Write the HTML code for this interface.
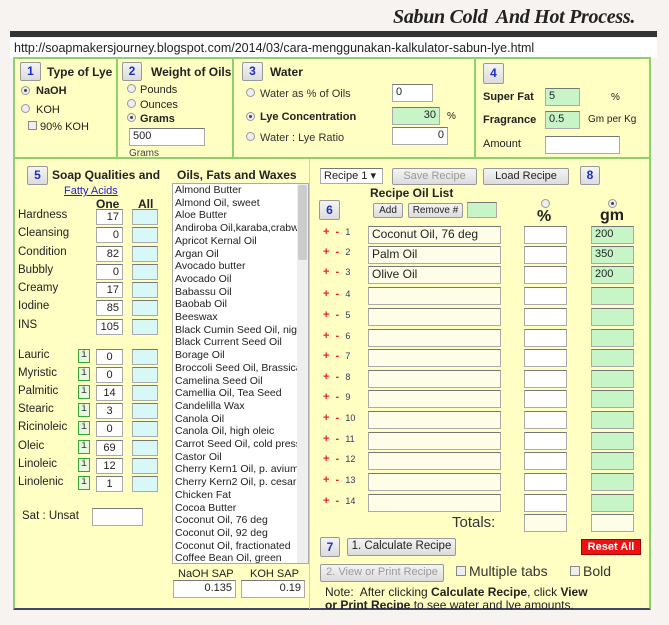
<!DOCTYPE html>
<html><head><meta charset="utf-8"><style>
*{box-sizing:border-box;margin:0;padding:0}
body{width:669px;height:625px;background:#f7f3f1;position:relative;overflow:hidden;font-family:"Liberation Sans","DejaVu Sans",sans-serif;font-size:11px;color:#222}
.a{position:absolute;white-space:nowrap}
.in{position:absolute;background:#fff;border:1px solid #aaa;border-top-color:#777;font-size:11px;text-align:right;padding:1px 3px;line-height:13px}
.g{background:#c8f5c8}
.c{background:#d8f8f8}
.y{background:#fdfde8}
.btn{position:absolute;background:linear-gradient(#f4f4f4,#dcdcdc);border:1px solid #999;border-radius:2px;text-align:center;font-size:11px;line-height:15px}
.num{color:#1a2fc8;font-weight:bold;font-size:12px}
.b{font-weight:bold}
.r{position:absolute;width:9px;height:9px;border-radius:50%;border:1px solid #999;background:#eee}
.r.on::after{content:"";position:absolute;left:2px;top:2px;width:3px;height:3px;border-radius:50%;background:#444}
.i{position:absolute;width:12px;height:14px;border:1px solid #3a3;background:#e8f8e0;font-size:10px;text-align:center;line-height:12px;font-family:"Liberation Mono",monospace;color:#333}
.lbl{position:absolute;font-size:11.5px;color:#222}
</style></head><body>
<div class="a" style="left:393px;top:6px;font-family:'Liberation Serif',serif;font-style:italic;font-weight:bold;font-size:20px;letter-spacing:-0.3px;color:#222">Sabun Cold&nbsp; And Hot Process.</div>
<div class="a" style="left:10px;top:31px;width:647px;height:6px;background:#333"></div>
<div class="a" style="left:10px;top:38px;width:647px;height:20px;background:#fff"></div>
<div class="a" style="left:14px;top:41px;font-size:12.5px;color:#222">http://soapmakersjourney.blogspot.com/2014/03/cara-menggunakan-kalkulator-sabun-lye.html</div>
<!-- main panel -->
<div class="a" style="left:13px;top:57px;width:638px;height:553px;background:#ffffc4;border:2px solid #8fcf6f;border-bottom-color:#446"></div>
<div class="a" style="left:13px;top:157px;width:638px;height:2px;background:#8fcf6f"></div>
<div class="a" style="left:116px;top:57px;width:2px;height:101px;background:#8fcf6f"></div>
<div class="a" style="left:232px;top:57px;width:2px;height:101px;background:#8fcf6f"></div>
<div class="a" style="left:474px;top:57px;width:2px;height:101px;background:#8fcf6f"></div>
<div class="a" style="left:309px;top:159px;width:1px;height:450px;background:#ccc"></div>

<!-- 1 -->
<div class="btn num" style="left:20px;top:62px;width:21px;height:19px;line-height:17px">1</div>
<div class="a b" style="left:47px;top:65px;font-size:12px">Type of Lye</div>
<div class="r on" style="left:21px;top:86px"></div><div class="a b" style="left:36px;top:85px">NaOH</div>
<div class="r" style="left:21px;top:104px"></div><div class="a" style="left:36px;top:104px">KOH</div>
<div class="a" style="left:28px;top:121px;width:9px;height:9px;border:1px solid #888;background:#eee"></div><div class="a" style="left:40px;top:121px">90% KOH</div>
<!-- 2 -->
<div class="btn num" style="left:122px;top:62px;width:20px;height:19px;line-height:17px">2</div>
<div class="a b" style="left:151px;top:65px;font-size:12px">Weight of Oils</div>
<div class="r" style="left:127px;top:84px"></div><div class="a" style="left:140px;top:84px">Pounds</div>
<div class="r" style="left:127px;top:99px"></div><div class="a" style="left:140px;top:99px">Ounces</div>
<div class="r on" style="left:127px;top:113px"></div><div class="a b" style="left:140px;top:113px">Grams</div>
<div class="in" style="left:129px;top:128px;width:76px;height:18px;text-align:left">500</div>
<div class="a" style="left:129px;top:148px;font-size:10px;color:#444">Grams</div>
<!-- 3 -->
<div class="btn num" style="left:242px;top:62px;width:21px;height:19px;line-height:17px">3</div>
<div class="a b" style="left:270px;top:65px;font-size:12px">Water</div>
<div class="r" style="left:246px;top:88px"></div><div class="a" style="left:260px;top:88px;color:#333">Water as % of Oils</div>
<div class="in" style="left:392px;top:84px;width:41px;height:18px;text-align:left">0</div>
<div class="r on" style="left:246px;top:112px"></div><div class="a b" style="left:260px;top:111px">Lye Concentration</div>
<div class="in g" style="left:392px;top:107px;width:48px;height:18px">30</div><div class="a" style="left:447px;top:111px;font-size:10px">%</div>
<div class="r" style="left:246px;top:132px"></div><div class="a" style="left:260px;top:132px;color:#333">Water : Lye Ratio</div>
<div class="in" style="left:392px;top:127px;width:56px;height:18px">0</div>
<!-- 4 -->
<div class="btn num" style="left:483px;top:63px;width:21px;height:21px;line-height:19px">4</div>
<div class="a b" style="left:483px;top:91px">Super Fat</div>
<div class="in g" style="left:545px;top:88px;width:35px;height:18px;text-align:left">5</div><div class="a" style="left:611px;top:92px;font-size:10px">%</div>
<div class="a b" style="left:483px;top:114px">Fragrance</div>
<div class="in g" style="left:545px;top:111px;width:35px;height:18px;text-align:left">0.5</div><div class="a" style="left:588px;top:114px;font-size:10px">Gm per Kg</div>
<div class="a" style="left:483px;top:138px">Amount</div>
<div class="in" style="left:545px;top:136px;width:75px;height:18px"></div>

<!-- 5 -->
<div class="btn num" style="left:27px;top:166px;width:21px;height:19px;line-height:17px">5</div>
<div class="a b" style="left:52px;top:168px;font-size:12px">Soap Qualities and</div>
<div class="a" style="left:64px;top:185px;color:#22c;text-decoration:underline">Fatty Acids</div>
<div class="a b" style="left:96px;top:197px;font-size:12px">One</div><div class="a b" style="left:138px;top:197px;font-size:12px">All</div>
<div class="lbl" style="left:18px;top:209px">Hardness</div><div class="in" style="left:96px;top:209px;width:27px;height:16px">17</div><div class="in c" style="left:132px;top:209px;width:26px;height:16px"></div>
<div class="lbl" style="left:18px;top:227px">Cleansing</div><div class="in" style="left:96px;top:227px;width:27px;height:16px">0</div><div class="in c" style="left:132px;top:227px;width:26px;height:16px"></div>
<div class="lbl" style="left:18px;top:246px">Condition</div><div class="in" style="left:96px;top:246px;width:27px;height:16px">82</div><div class="in c" style="left:132px;top:246px;width:26px;height:16px"></div>
<div class="lbl" style="left:18px;top:264px">Bubbly</div><div class="in" style="left:96px;top:264px;width:27px;height:16px">0</div><div class="in c" style="left:132px;top:264px;width:26px;height:16px"></div>
<div class="lbl" style="left:18px;top:282px">Creamy</div><div class="in" style="left:96px;top:282px;width:27px;height:16px">17</div><div class="in c" style="left:132px;top:282px;width:26px;height:16px"></div>
<div class="lbl" style="left:18px;top:300px">Iodine</div><div class="in" style="left:96px;top:300px;width:27px;height:16px">85</div><div class="in c" style="left:132px;top:300px;width:26px;height:16px"></div>
<div class="lbl" style="left:18px;top:319px">INS</div><div class="in" style="left:96px;top:319px;width:27px;height:16px">105</div><div class="in c" style="left:132px;top:319px;width:26px;height:16px"></div>

<div class="lbl" style="left:18px;top:349px">Lauric</div><div class="i" style="left:78px;top:349px">i</div><div class="in" style="left:96px;top:349px;width:27px;height:16px;text-align:center">0</div><div class="in c" style="left:132px;top:349px;width:26px;height:16px"></div>
<div class="lbl" style="left:18px;top:367px">Myristic</div><div class="i" style="left:78px;top:367px">i</div><div class="in" style="left:96px;top:367px;width:27px;height:16px;text-align:center">0</div><div class="in c" style="left:132px;top:367px;width:26px;height:16px"></div>
<div class="lbl" style="left:18px;top:385px">Palmitic</div><div class="i" style="left:78px;top:385px">i</div><div class="in" style="left:96px;top:385px;width:27px;height:16px;text-align:center">14</div><div class="in c" style="left:132px;top:385px;width:26px;height:16px"></div>
<div class="lbl" style="left:18px;top:403px">Stearic</div><div class="i" style="left:78px;top:403px">i</div><div class="in" style="left:96px;top:403px;width:27px;height:16px;text-align:center">3</div><div class="in c" style="left:132px;top:403px;width:26px;height:16px"></div>
<div class="lbl" style="left:18px;top:421px">Ricinoleic</div><div class="i" style="left:78px;top:421px">i</div><div class="in" style="left:96px;top:421px;width:27px;height:16px;text-align:center">0</div><div class="in c" style="left:132px;top:421px;width:26px;height:16px"></div>
<div class="lbl" style="left:18px;top:440px">Oleic</div><div class="i" style="left:78px;top:440px">i</div><div class="in" style="left:96px;top:440px;width:27px;height:16px;text-align:center">69</div><div class="in c" style="left:132px;top:440px;width:26px;height:16px"></div>
<div class="lbl" style="left:18px;top:458px">Linoleic</div><div class="i" style="left:78px;top:458px">i</div><div class="in" style="left:96px;top:458px;width:27px;height:16px;text-align:center">12</div><div class="in c" style="left:132px;top:458px;width:26px;height:16px"></div>
<div class="lbl" style="left:18px;top:476px">Linolenic</div><div class="i" style="left:78px;top:476px">i</div><div class="in" style="left:96px;top:476px;width:27px;height:16px;text-align:center">1</div><div class="in c" style="left:132px;top:476px;width:26px;height:16px"></div>
<div class="lbl" style="left:22px;top:510px">Sat : Unsat</div><div class="in" style="left:92px;top:508px;width:51px;height:18px"></div>

<!-- oils list -->
<div class="a b" style="left:177px;top:168px;font-size:12px">Oils, Fats and Waxes</div>
<div class="a" style="left:172px;top:183px;width:137px;height:381px;background:#fff;border:1px solid #aaa;overflow:hidden">
<div style="position:absolute;right:0;top:0;width:11px;height:100%;background:#eee"></div>
<div style="position:absolute;right:1px;top:1px;width:9px;height:75px;background:#ccc;border-radius:2px"></div>
<div style="position:absolute;left:2px;top:0;font-size:10.5px;line-height:12.7px;color:#222;width:122px;overflow:hidden">
Almond Butter<br>Almond Oil, sweet<br>Aloe Butter<br>Andiroba Oil,karaba,crabwood<br>Apricot Kernal Oil<br>Argan Oil<br>Avocado butter<br>Avocado Oil<br>Babassu Oil<br>Baobab Oil<br>Beeswax<br>Black Cumin Seed Oil, nigella<br>Black Current Seed Oil<br>Borage Oil<br>Broccoli Seed Oil, Brassica<br>Camelina Seed Oil<br>Camellia Oil, Tea Seed<br>Candelilla Wax<br>Canola Oil<br>Canola Oil, high oleic<br>Carrot Seed Oil, cold pressed<br>Castor Oil<br>Cherry Kern1 Oil, p. avium<br>Cherry Kern2 Oil, p. cesarus<br>Chicken Fat<br>Cocoa Butter<br>Coconut Oil, 76 deg<br>Coconut Oil, 92 deg<br>Coconut Oil, fractionated<br>Coffee Bean Oil, green</div></div>
<div class="a" style="left:178px;top:568px;font-size:11px">NaOH SAP</div><div class="a" style="left:250px;top:568px;font-size:11px">KOH SAP</div>
<div class="in" style="left:173px;top:580px;width:63px;height:18px">0.135</div>
<div class="in" style="left:241px;top:580px;width:64px;height:18px">0.19</div>

<!-- right -->
<div class="in" style="left:320px;top:168px;width:63px;height:16px;text-align:left;font-size:11px">Recipe 1 ▾</div>
<div class="btn" style="left:392px;top:168px;width:85px;height:17px;color:#999">Save Recipe</div>
<div class="btn" style="left:483px;top:168px;width:86px;height:17px">Load Recipe</div>
<div class="btn num" style="left:580px;top:166px;width:20px;height:19px;line-height:17px">8</div>
<div class="a b" style="left:370px;top:186px;font-size:12px">Recipe Oil List</div>
<div class="btn num" style="left:319px;top:200px;width:21px;height:20px;line-height:18px">6</div>
<div class="btn" style="left:373px;top:203px;width:30px;height:15px;font-size:10px;line-height:13px">Add</div>
<div class="btn" style="left:408px;top:203px;width:55px;height:15px;font-size:10px;line-height:13px">Remove #</div>
<div class="in g" style="left:467px;top:202px;width:30px;height:16px"></div>
<div class="r" style="left:541px;top:199px"></div><div class="r on" style="left:608px;top:199px"></div>
<div class="a b" style="left:537px;top:208px;font-size:16px">%</div>
<div class="a b" style="left:600px;top:207px;font-size:16px">gm</div>

<div style="position:absolute;left:0;top:226px">
<div class="a" style="left:323px;top:0;color:#e22;font-weight:bold;font-size:11px">+ &nbsp;-&nbsp; <span style="color:#336;font-weight:normal;font-size:9px">1</span></div>
<div class="in y" style="left:368px;top:0;width:133px;height:18px;text-align:left;font-size:12px">Coconut Oil, 76 deg</div>
<div class="in" style="left:524px;top:0;width:43px;height:18px"></div><div class="in g" style="left:591px;top:0;width:43px;height:18px;text-align:left">200</div>
</div>
<div style="position:absolute;left:0;top:246px">
<div class="a" style="left:323px;top:0;color:#e22;font-weight:bold;font-size:11px">+ &nbsp;-&nbsp; <span style="color:#336;font-weight:normal;font-size:9px">2</span></div>
<div class="in y" style="left:368px;top:0;width:133px;height:18px;text-align:left;font-size:12px">Palm Oil</div>
<div class="in" style="left:524px;top:0;width:43px;height:18px"></div><div class="in g" style="left:591px;top:0;width:43px;height:18px;text-align:left">350</div>
</div>
<div style="position:absolute;left:0;top:266px">
<div class="a" style="left:323px;top:0;color:#e22;font-weight:bold;font-size:11px">+ &nbsp;-&nbsp; <span style="color:#336;font-weight:normal;font-size:9px">3</span></div>
<div class="in y" style="left:368px;top:0;width:133px;height:18px;text-align:left;font-size:12px">Olive Oil</div>
<div class="in" style="left:524px;top:0;width:43px;height:18px"></div><div class="in g" style="left:591px;top:0;width:43px;height:18px;text-align:left">200</div>
</div>
<div style="position:absolute;left:0;top:287px"><div class="a" style="left:323px;top:1px;color:#e22;font-weight:bold;font-size:11px">+ &nbsp;-&nbsp; <span style="color:#336;font-weight:normal;font-size:9px">4</span></div><div class="in y" style="left:368px;top:0;width:133px;height:18px"></div><div class="in" style="left:524px;top:0;width:43px;height:18px"></div><div class="in g" style="left:591px;top:0;width:43px;height:18px"></div></div>
<div style="position:absolute;left:0;top:308px"><div class="a" style="left:323px;top:1px;color:#e22;font-weight:bold;font-size:11px">+ &nbsp;-&nbsp; <span style="color:#336;font-weight:normal;font-size:9px">5</span></div><div class="in y" style="left:368px;top:0;width:133px;height:18px"></div><div class="in" style="left:524px;top:0;width:43px;height:18px"></div><div class="in g" style="left:591px;top:0;width:43px;height:18px"></div></div>
<div style="position:absolute;left:0;top:329px"><div class="a" style="left:323px;top:1px;color:#e22;font-weight:bold;font-size:11px">+ &nbsp;-&nbsp; <span style="color:#336;font-weight:normal;font-size:9px">6</span></div><div class="in y" style="left:368px;top:0;width:133px;height:18px"></div><div class="in" style="left:524px;top:0;width:43px;height:18px"></div><div class="in g" style="left:591px;top:0;width:43px;height:18px"></div></div>
<div style="position:absolute;left:0;top:349px"><div class="a" style="left:323px;top:1px;color:#e22;font-weight:bold;font-size:11px">+ &nbsp;-&nbsp; <span style="color:#336;font-weight:normal;font-size:9px">7</span></div><div class="in y" style="left:368px;top:0;width:133px;height:18px"></div><div class="in" style="left:524px;top:0;width:43px;height:18px"></div><div class="in g" style="left:591px;top:0;width:43px;height:18px"></div></div>
<div style="position:absolute;left:0;top:370px"><div class="a" style="left:323px;top:1px;color:#e22;font-weight:bold;font-size:11px">+ &nbsp;-&nbsp; <span style="color:#336;font-weight:normal;font-size:9px">8</span></div><div class="in y" style="left:368px;top:0;width:133px;height:18px"></div><div class="in" style="left:524px;top:0;width:43px;height:18px"></div><div class="in g" style="left:591px;top:0;width:43px;height:18px"></div></div>
<div style="position:absolute;left:0;top:390px"><div class="a" style="left:323px;top:1px;color:#e22;font-weight:bold;font-size:11px">+ &nbsp;-&nbsp; <span style="color:#336;font-weight:normal;font-size:9px">9</span></div><div class="in y" style="left:368px;top:0;width:133px;height:18px"></div><div class="in" style="left:524px;top:0;width:43px;height:18px"></div><div class="in g" style="left:591px;top:0;width:43px;height:18px"></div></div>
<div style="position:absolute;left:0;top:411px"><div class="a" style="left:323px;top:1px;color:#e22;font-weight:bold;font-size:11px">+ &nbsp;-&nbsp; <span style="color:#336;font-weight:normal;font-size:9px">10</span></div><div class="in y" style="left:368px;top:0;width:133px;height:18px"></div><div class="in" style="left:524px;top:0;width:43px;height:18px"></div><div class="in g" style="left:591px;top:0;width:43px;height:18px"></div></div>
<div style="position:absolute;left:0;top:432px"><div class="a" style="left:323px;top:1px;color:#e22;font-weight:bold;font-size:11px">+ &nbsp;-&nbsp; <span style="color:#336;font-weight:normal;font-size:9px">11</span></div><div class="in y" style="left:368px;top:0;width:133px;height:18px"></div><div class="in" style="left:524px;top:0;width:43px;height:18px"></div><div class="in g" style="left:591px;top:0;width:43px;height:18px"></div></div>
<div style="position:absolute;left:0;top:452px"><div class="a" style="left:323px;top:1px;color:#e22;font-weight:bold;font-size:11px">+ &nbsp;-&nbsp; <span style="color:#336;font-weight:normal;font-size:9px">12</span></div><div class="in y" style="left:368px;top:0;width:133px;height:18px"></div><div class="in" style="left:524px;top:0;width:43px;height:18px"></div><div class="in g" style="left:591px;top:0;width:43px;height:18px"></div></div>
<div style="position:absolute;left:0;top:473px"><div class="a" style="left:323px;top:1px;color:#e22;font-weight:bold;font-size:11px">+ &nbsp;-&nbsp; <span style="color:#336;font-weight:normal;font-size:9px">13</span></div><div class="in y" style="left:368px;top:0;width:133px;height:18px"></div><div class="in" style="left:524px;top:0;width:43px;height:18px"></div><div class="in g" style="left:591px;top:0;width:43px;height:18px"></div></div>
<div style="position:absolute;left:0;top:494px"><div class="a" style="left:323px;top:1px;color:#e22;font-weight:bold;font-size:11px">+ &nbsp;-&nbsp; <span style="color:#336;font-weight:normal;font-size:9px">14</span></div><div class="in y" style="left:368px;top:0;width:133px;height:18px"></div><div class="in" style="left:524px;top:0;width:43px;height:18px"></div><div class="in g" style="left:591px;top:0;width:43px;height:18px"></div></div>

<div class="a" style="left:452px;top:514px;font-size:15px;color:#333">Totals:</div>
<div class="in y" style="left:524px;top:514px;width:43px;height:18px"></div>
<div class="in y" style="left:591px;top:514px;width:43px;height:18px"></div>
<div class="btn num" style="left:320px;top:537px;width:20px;height:20px;line-height:18px">7</div>
<div class="btn" style="left:347px;top:538px;width:109px;height:18px;font-size:11.5px">1. Calculate Recipe</div>
<div class="a" style="left:581px;top:539px;width:60px;height:16px;background:#ee1111;border:1px solid #900;color:#fff;font-weight:bold;font-size:11px;text-align:center;line-height:14px">Reset All</div>
<div class="btn" style="left:320px;top:564px;width:124px;height:18px;color:#999;font-size:11px">2. View or Print Recipe</div>
<div class="a" style="left:456px;top:566px;width:10px;height:10px;border:1px solid #888;background:#eee"></div>
<div class="a" style="left:469px;top:563px;font-size:14px;color:#333">Multiple tabs</div>
<div class="a" style="left:570px;top:566px;width:10px;height:10px;border:1px solid #888;background:#eee"></div>
<div class="a" style="left:583px;top:563px;font-size:14px;color:#333">Bold</div>
<div class="a" style="left:325px;top:585px;font-size:12px;color:#222">Note:&nbsp; After clicking <b>Calculate Recipe</b>, click <b>View</b></div>
<div class="a" style="left:325px;top:598px;font-size:12px;color:#222"><b>or Print Recipe</b> to see water and lye amounts.</div>
<div class="a" style="left:13px;top:610px;width:640px;height:15px;background:#f7f3f1"></div>
</body></html>
